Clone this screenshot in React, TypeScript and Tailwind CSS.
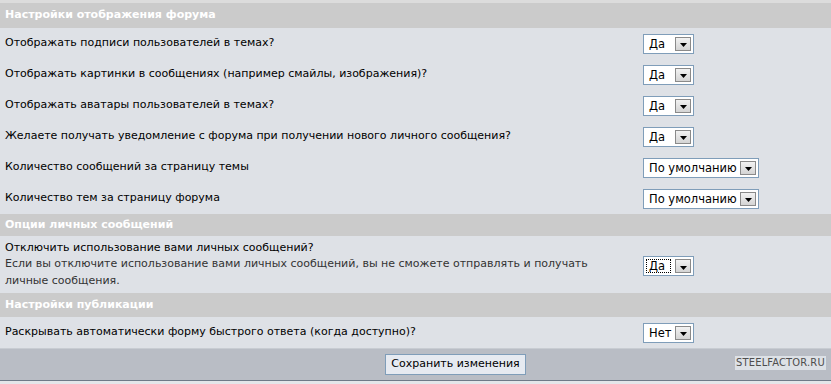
import React from 'react';

type Row = { label: string; value: string; wide?: boolean };

const forumRows: Row[] = [
  { label: 'Отображать подписи пользователей в темах?', value: 'Да' },
  { label: 'Отображать картинки в сообщениях (например смайлы, изображения)?', value: 'Да' },
  { label: 'Отображать аватары пользователей в темах?', value: 'Да' },
  { label: 'Желаете получать уведомление с форума при получении нового личного сообщения?', value: 'Да' },
  { label: 'Количество сообщений за страницу темы', value: 'По умолчанию', wide: true },
  { label: 'Количество тем за страницу форума', value: 'По умолчанию', wide: true },
];

function Select({ value, wide, focused }: { value: string; wide?: boolean; focused?: boolean }) {
  return (
    <div
      className={`flex items-center h-[20px] border border-[#7f9db9] bg-white pl-[2px] pr-[1px] ${
        wide ? 'w-[116px]' : 'w-[51px]'
      }`}
    >
      <span
        className={`flex-1 whitespace-nowrap leading-[14px] pl-[3px] text-[11.5px] text-black ${
          focused ? 'outline outline-1 outline-dotted outline-black -outline-offset-1 mr-[4px]' : ''
        }`}
      >
        {value}
      </span>
      <span className="flex items-center justify-center shrink-0 w-[16px] h-[14px] border border-[#8a8a8a] bg-gradient-to-b from-[#f2f2f2] to-[#d4d4d4] mr-[1px]">
        <svg width="7" height="4" viewBox="0 0 7 4" className="mt-[3px]">
          <path d="M0 0h7L3.5 4z" fill="#000" />
        </svg>
      </span>
    </div>
  );
}

function Header({ title, h }: { title: string; h: string }) {
  return (
    <div className={`flex items-center bg-[#cbcbcb] px-[5px] ${h}`}>
      <span className="text-white font-bold text-[11px]">{title}</span>
    </div>
  );
}

function OptionRow({ label, value, wide }: Row) {
  return (
    <div className="flex items-center h-[31px] bg-[#dee1e6]">
      <div className="flex-1 pl-[5px] text-[11px] text-black">{label}</div>
      <div className="w-[188px] shrink-0">
        <Select value={value} wide={wide} />
      </div>
    </div>
  );
}

export default function App() {
  return (
    <main
      className="relative w-[831px] h-[384px] bg-[#dee1e6] overflow-hidden"
      style={{ fontFamily: '"DejaVu Sans", Verdana, sans-serif' }}
    >
      <div className="h-[3px] bg-[#dcdcdc]" />
      <Header title="Настройки отображения форума" h="h-[25px]" />
      {forumRows.map((r) => (
        <OptionRow key={r.label} {...r} />
      ))}
      <Header title="Опции личных сообщений" h="h-[22px]" />
      <div className="flex items-center h-[57px] bg-[#dee1e6]">
        <div className="w-[643px] shrink-0 pl-[5px] pr-[40px] text-[11px] leading-[16.5px] text-black">
          <div>Отключить использование вами личных сообщений?</div>
          <div className="text-[#333]">
            Если вы отключите использование вами личных сообщений, вы не сможете отправлять и получать личные
            сообщения.
          </div>
        </div>
        <div className="w-[188px] shrink-0 pt-[3px]">
          <Select value="Да" focused />
        </div>
      </div>
      <Header title="Настройки публикации" h="h-[24px]" />
      <OptionRow label="Раскрывать автоматически форму быстрого ответа (когда доступно)?" value="Нет" />
      <div className="flex items-center h-[32px] bg-[#b9bdc5] border-t border-[#c8ccd2] pl-[385px]">
        <button className="h-[21px] w-[141px] border border-[#7f9db9] bg-[#e6eaf1] text-[11px] text-black">
          Сохранить изменения
        </button>
      </div>
      <div className="h-[1px] bg-[#6f7a88]" />
      <div className="h-[3px] bg-[#e4e6ea]" />
      <div
        className="absolute left-[735px] top-[356px] bg-[#dde1e6] px-[1px] text-[11px] leading-[14px] text-[#4d4d4d] tracking-[0.2px]"
        style={{ fontFamily: '"DejaVu Sans Condensed", "Liberation Sans", sans-serif' }}
      >
        STEELFACTOR.RU
      </div>
    </main>
  );
}
